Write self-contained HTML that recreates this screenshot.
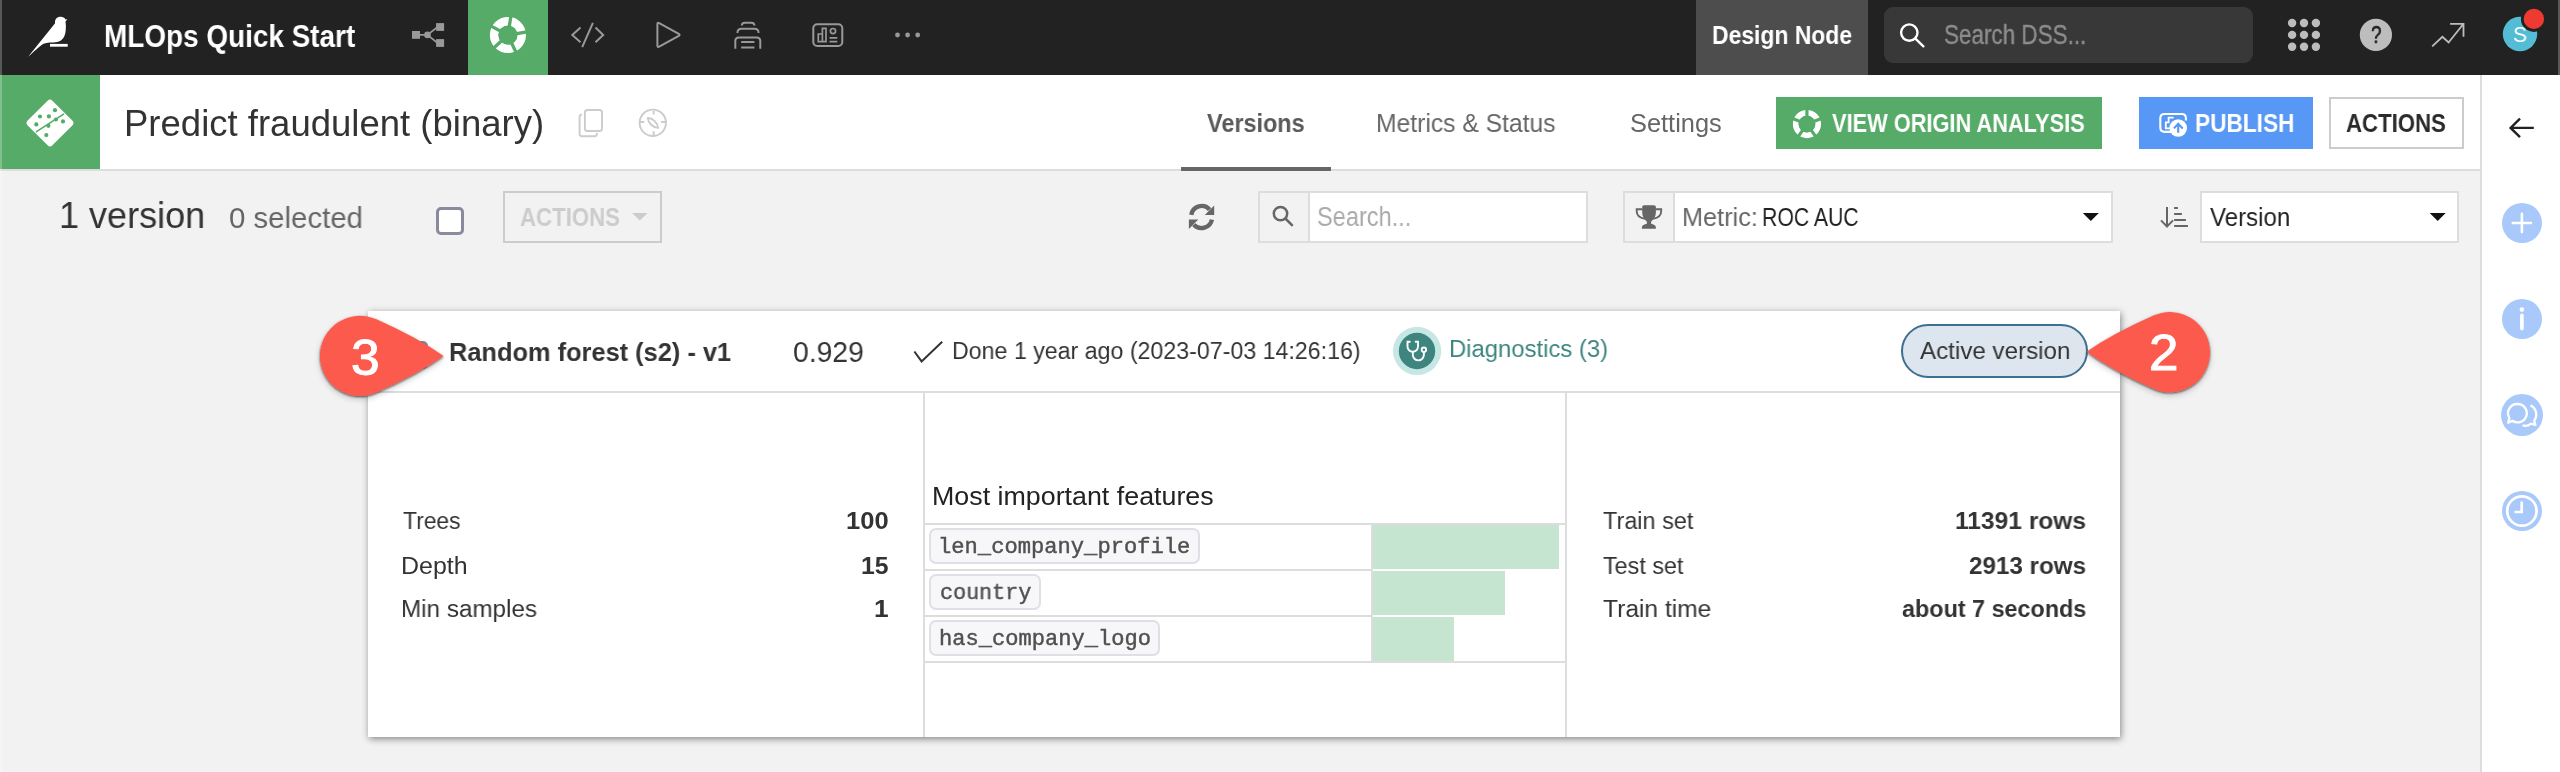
<!DOCTYPE html>
<html lang="en">
<head>
<meta charset="utf-8">
<title>Predict fraudulent (binary) - MLOps Quick Start</title>
<style>
*{box-sizing:border-box;margin:0;padding:0}
html,body{width:2560px;height:772px;overflow:hidden;background:#f2f2f2;font-family:"Liberation Sans",sans-serif}
.abs,.t,div,svg{position:absolute}
.t{white-space:nowrap;line-height:1;transform-origin:0 0;display:block;will-change:transform}
#topbar{left:0;top:0;width:2560px;height:75px;background:#222222}
#mlnav{left:468px;top:0;width:80px;height:75px;background:#55ab67}
#dnode{left:1696px;top:0;width:172px;height:75px;background:#4d4d4d}
#gsearch{left:1884px;top:7px;width:369px;height:56px;background:#383838;border-radius:9px}
#hdr{left:0;top:75px;width:2481px;height:94px;background:#fff}
#hdrline{left:0;top:169px;width:2481px;height:2px;background:#dddddd}
#objicon{left:0;top:75px;width:100px;height:94px;background:#55ab67}
#tabline{left:1181px;top:167px;width:150px;height:4px;background:#666}
#btn1{left:1776px;top:97px;width:326px;height:52px;background:#55ab67}
#btn2{left:2139px;top:97px;width:174px;height:52px;background:#5797f6}
#btn3{left:2329px;top:97px;width:135px;height:52px;background:#fff;border:2px solid #cccccc}
#side{left:2480px;top:75px;width:80px;height:697px;background:#fff;border-left:2px solid #dddddd}
.sc{width:40px;height:40px;border-radius:50%;background:#a8c9fa;left:2502px}
#chk{left:436px;top:207px;width:28px;height:28px;border:3px solid #8a8a9e;border-radius:5px;background:#fff}
#dactbtn{left:503px;top:191px;width:159px;height:52px;border:2px solid #cccccc}
.ig{top:191px;height:52px;border:2px solid #dddddd;background:#fff}
.igp{top:191px;height:52px;border:2px solid #dddddd;border-right:0;background:#f2f2f2}
#card{left:368px;top:311px;width:1752px;height:426px;background:#fff;box-shadow:1px 2px 7px rgba(0,0,0,.45)}
.hl{background:#dddddd;height:2px}
.vl{background:#dddddd;width:2px}
.tag{left:929px;height:36px;background:#f7f7f9;border:2px solid #dfdfe6;border-radius:7px}
.bar{left:1373px;height:44px;background:#c6e5d0}
#pill{left:1901px;top:324px;width:187px;height:54px;border:2px solid #3d6f8e;border-radius:27px;background:#dde6ee}
#cchk{left:400px;top:341px;width:28px;height:28px;border:3px solid #8a8a9e;border-radius:5px;background:#fff}
.edge{top:0;width:2px;height:772px}
</style>
</head>
<body>
<!-- ============ top navigation bar ============ -->
<div id="topbar"></div>
<div id="mlnav"></div>
<div id="dnode"></div>
<div id="gsearch"></div>
<span class="t" style="left:103.98px;top:21.1px;font-size:30.6px;font-weight:700;color:#ffffff;transform:scaleX(0.9121)">MLOps Quick Start</span>
<span class="t" style="left:1712.27px;top:22.07px;font-size:26.5px;font-weight:700;color:#ffffff;transform:scaleX(0.8648)">Design Node</span>
<span class="t" style="left:1944.16px;top:21.81px;font-size:26.8px;-webkit-text-stroke:.4px #8c8c8c;color:#8c8c8c;transform:scaleX(0.8383)">Search DSS...</span>
<svg id="navicons" style="left:0;top:0" width="2560" height="75" viewBox="0 0 2560 75">
<!-- bird logo -->
<path fill="#fff" d="M27.9,56.9 L55.1,23.2 C54.4,19.4 57,16.7 60.6,16.7 C63,16.7 64.6,17.8 65.6,19.4 L67.4,19.2 L65.5,21.6 C66,24.5 66,27.5 65.7,30.5 C65.1,36.8 62.4,41 57,42 C52,42.8 47,42.2 43.6,43.8 C41.2,45 38.5,47.6 27.9,56.9 Z"/>
<rect fill="#fff" x="50" y="43.9" width="17.7" height="2.8"/>
<!-- flow -->
<g fill="#999999" stroke="#999999">
<rect x="412" y="31" width="8" height="7.8" stroke="none"/>
<rect x="436.1" y="23.1" width="8" height="7.8" stroke="none"/>
<rect x="436.1" y="39.1" width="8" height="7.8" stroke="none"/>
<circle cx="427.5" cy="34.9" r="3.3" stroke="none"/>
<path d="M419,34.9 H427.5 M427.5,34.9 L437.5,27 M427.5,34.9 L437.5,43" fill="none" stroke-width="1.7"/>
</g>
<!-- ML ring -->
<circle cx="507.9" cy="35.05" r="13.68" fill="none" stroke="#fff" stroke-width="8.75"/>
<path d="M507.90,35.05 L510.96,15.74 M507.90,35.05 L527.21,31.99 M507.90,35.05 L516.16,52.77 M507.90,35.05 L493.49,48.26 M507.90,35.05 L490.64,25.87" fill="none" stroke="#55ab67" stroke-width="3.3"/>
<circle cx="507.9" cy="35.05" r="9.6" fill="#55ab67"/>
<!-- code -->
<g fill="none" stroke="#999999" stroke-width="2">
<path d="M580.5,27.6 L572.3,34.9 L580.5,42.2 M592.9,22.9 L582.2,47.1 M595.5,27.6 L603.2,34.9 L595.5,42.2"/>
<!-- play -->
<path d="M657.4,24.2 Q657.4,22.2 659.2,23.1 L678.8,33.8 Q680.4,34.8 678.8,35.8 L659.2,46.7 Q657.4,47.6 657.4,45.6 Z" stroke-linejoin="round"/>
<!-- jobs -->
<path d="M741.8,25.6 Q741.8,22.7 744.8,22.7 H751.4 Q754.4,22.7 754.4,25.6"/>
<path d="M737.4,33 Q737.4,28.8 741.8,28.8 H754.2 Q758.6,28.8 758.6,33"/>
<path d="M735.3,48.7 V41 Q735.3,37.4 739,37.4 H756.6 Q760.3,37.4 760.3,41 V48.7"/>
<path d="M741.2,41.9 H754.4 M741.2,47.6 H754.4"/>
<!-- dashboard -->
<rect x="813.3" y="24.2" width="29" height="21.7" rx="4"/>
<path d="M818.3,41.6 V34 H822.4 V28.3 H826 V41.6 Z M822.4,34 V41.6" stroke-width="1.7"/>
<circle cx="833" cy="31.1" r="2.6" stroke-width="1.7"/>
<path d="M829.5,37.9 H837.3 M829.5,41.7 H837.3" stroke-width="1.7"/>
</g>
<!-- more dots -->
<g fill="#999999"><circle cx="897.5" cy="35" r="2.4"/><circle cx="907.6" cy="35" r="2.4"/><circle cx="917.7" cy="35" r="2.4"/></g>
<!-- search magnifier -->
<g fill="none" stroke="#fff" stroke-width="2.4" stroke-linecap="round"><circle cx="1909.3" cy="32.6" r="8.2"/><path d="M1915.4,38.6 L1923.4,46.3"/></g>
<!-- apps grid -->
<g fill="#bdbdbd">
<circle cx="2292.1" cy="23" r="4.2"/><circle cx="2304" cy="23" r="4.2"/><circle cx="2315.9" cy="23" r="4.2"/>
<circle cx="2292.1" cy="34.9" r="4.2"/><circle cx="2304" cy="34.9" r="4.2"/><circle cx="2315.9" cy="34.9" r="4.2"/>
<circle cx="2292.1" cy="46.8" r="4.2"/><circle cx="2304" cy="46.8" r="4.2"/><circle cx="2315.9" cy="46.8" r="4.2"/>
<!-- help -->
<circle cx="2375.9" cy="34.9" r="16.1"/>
</g>
<!-- trend -->
<path d="M2432.2,46.4 L2442.4,36.8 L2448.6,42.5 L2463.5,23.8 M2450.1,23.8 H2463.5 V36.8" fill="none" stroke="#bdbdbd" stroke-width="1.8"/>
<!-- avatar -->
<circle cx="2520" cy="34" r="17.2" fill="#54bcd5"/>
<circle cx="2533.9" cy="18.9" r="13" fill="#222222"/>
<circle cx="2533.9" cy="18.9" r="10.2" fill="#ee3a30"/>

</svg>
<span class="t" style="left:2370.58px;top:24.13px;font-size:23px;-webkit-text-stroke:.5px #222;color:#222222;transform:scaleX(0.8182)">?</span>
<span class="t" style="left:2512.54px;top:23.88px;font-size:22px;color:#ffffff;transform:scaleX(0.9615)">S</span>

<!-- ============ object header ============ -->
<div id="hdr"></div>
<div id="hdrline"></div>
<div id="objicon"></div>
<div id="tabline"></div>
<span class="t" style="left:123.78px;top:106.27px;font-size:36.3px;color:#333333;transform:scaleX(1.0061)">Predict fraudulent (binary)</span>
<span class="t" style="left:1207.3px;top:111.27px;font-size:25.2px;font-weight:700;color:#5a5a5a;transform:scaleX(0.9298)">Versions</span>
<span class="t" style="left:1376.34px;top:111.27px;font-size:25.2px;color:#666666;transform:scaleX(0.979)">Metrics &amp; Status</span>
<span class="t" style="left:1629.79px;top:111.27px;font-size:25.2px;color:#666666;transform:scaleX(1.0079)">Settings</span>
<div id="btn1"></div>
<div id="btn2"></div>
<div id="btn3"></div>
<span class="t" style="left:1831.5px;top:110.8px;font-size:25.4px;font-weight:700;color:#ffffff;transform:scaleX(0.8582)">VIEW ORIGIN ANALYSIS</span>
<span class="t" style="left:2195.01px;top:110.8px;font-size:25.4px;font-weight:700;color:#ffffff;transform:scaleX(0.8926)">PUBLISH</span>
<span class="t" style="left:2346.43px;top:110.8px;font-size:25.4px;font-weight:700;color:#2b2b2b;transform:scaleX(0.8741)">ACTIONS</span>
<svg id="hdricons" style="left:0;top:75px" width="2481" height="94" viewBox="0 75 2481 94">
<!-- prediction model diamond -->
<g transform="rotate(45 50 123)"><rect x="32.5" y="105.5" width="35" height="35" rx="3.4" fill="#fff"/></g>
<g fill="#55ab67">
<circle cx="55" cy="110.2" r="2.1"/><circle cx="40" cy="116.5" r="2.1"/><circle cx="48.9" cy="116.4" r="2.1"/>
<circle cx="55.9" cy="119.5" r="2.1"/><circle cx="63" cy="121.4" r="2.1"/><circle cx="36.3" cy="124.4" r="2.1"/>
<circle cx="48.4" cy="125.8" r="2.1"/><circle cx="46.3" cy="135.1" r="2.1"/>
</g>
<path d="M36.5,131.7 L63.6,114.2" stroke="#55ab67" stroke-width="1.6" stroke-linecap="round"/>
<!-- copy -->
<g fill="none" stroke="#cccccc" stroke-width="1.9" stroke-linecap="round">
<rect x="584.9" y="110" width="17.1" height="21" rx="2.6"/>
<path d="M581.4,114.6 Q579.6,114.9 579.6,117 V134 Q579.6,136.2 581.8,136.2 H594.6 Q596.6,136.2 597,133.8"/>
<!-- compass -->
<circle cx="652.8" cy="122.8" r="13.2"/>
<path d="M653.7,111 V114.6 M653.7,131.3 V134.9 M640.1,122 H644.4 M661.1,122 H665.4" stroke-linecap="butt"/>
<path d="M647.8,118 C652.6,117.8 658,123.2 658.1,127.9 C653.3,128.1 647.9,122.7 647.8,118 Z" stroke-linejoin="round"/>
</g>
<!-- view origin analysis ring -->
<circle cx="1806.95" cy="124.07" r="11.25" fill="none" stroke="#fff" stroke-width="5.70"/>
<path d="M1806.95,124.07 L1806.95,108.47 M1806.95,124.07 L1821.51,118.48 M1806.95,124.07 L1815.90,136.85 M1806.95,124.07 L1798.00,136.85 M1806.95,124.07 L1792.39,118.48" fill="none" stroke="#55ab67" stroke-width="3.2"/>
<circle cx="1806.95" cy="124.07" r="8.40" fill="#55ab67"/>
<!-- publish icon -->
<g fill="none" stroke="#fff" stroke-width="2.1">
<path d="M2171,131.9 H2164.6 Q2160.3,131.9 2160.3,127.6 V118.3 Q2160.3,114 2164.6,114 H2181.6 Q2185.9,114 2185.9,118.3 V120.6"/>
<path d="M2170.6,128.4 H2165.8 V122.4 H2168.6 V117.6 H2173.6" stroke-width="1.8"/>
</g>
<circle cx="2178.2" cy="128" r="8.8" fill="#fff"/>
<path d="M2178.2,132.8 V124 M2173.9,128.4 L2178.2,123.8 L2182.7,128.4" fill="none" stroke="#5797f6" stroke-width="2.1"/>

</svg>

<!-- ============ right side panel ============ -->
<div id="side"></div>
<div class="sc" style="top:203px"></div>
<div class="sc" style="top:299px"></div>
<div class="sc" style="top:394px;left:2501px;width:42px;height:42px"></div>
<div class="sc" style="top:491px"></div>
<svg id="sideicons" style="left:2482px;top:75px" width="78" height="697" viewBox="2482 75 78 697">
<!-- back arrow -->
<path d="M2533.8,127.9 H2511 M2520,118.6 L2510.6,127.9 L2520,137.2" fill="none" stroke="#222" stroke-width="2.4"/>
<!-- plus -->
<path d="M2521.9,213.9 V232.1 M2512.8,223 H2531" stroke="#fff" stroke-width="2.6" stroke-linecap="round"/>
<!-- info -->
<circle cx="2521.9" cy="309.6" r="2.3" fill="#fff"/>
<path d="M2521.9,315.4 V328.6" stroke="#fff" stroke-width="3.6" stroke-linecap="round"/>
<!-- chat -->
<g fill="none" stroke="#fff" stroke-width="2.3" stroke-linejoin="round">
<path d="M2517.5,404 A9.2,9.2 0 1 1 2512.4,420.8 L2508.2,422.8 L2509.4,418 A9.2,9.2 0 0 1 2517.5,404 Z"/>
<path d="M2530.4,405.4 A10,10 0 0 1 2534.2,420.6 L2535.4,425 L2531,423.6 A9,9 0 0 1 2522.6,425.4"/>
</g>
<!-- clock -->
<circle cx="2521.9" cy="511" r="14.7" fill="none" stroke="#fff" stroke-width="2.7"/>
<path d="M2521.7,501.5 V512 H2514.5" fill="none" stroke="#fff" stroke-width="2.7"/>

</svg>

<!-- ============ filter row ============ -->
<span class="t" style="left:59.08px;top:197.08px;font-size:37px;color:#333333;transform:scaleX(0.9738)">1 version</span>
<span class="t" style="left:229.3px;top:203.43px;font-size:29.5px;color:#666666;transform:scaleX(0.9962)">0 selected</span>
<div id="chk"></div>
<div id="dactbtn"></div>
<span class="t" style="left:520.42px;top:204.9px;font-size:25.4px;font-weight:700;color:#cccccc;transform:scaleX(0.875)">ACTIONS</span>
<div class="igp" style="left:1258px;width:52px"></div>
<div class="ig" style="left:1308px;width:280px"></div>
<span class="t" style="left:1317.42px;top:203.71px;font-size:26.8px;color:#aaaaaa;transform:scaleX(0.8798)">Search...</span>
<div class="igp" style="left:1623px;width:52px"></div>
<div class="ig" style="left:1673px;width:440px"></div>
<span class="t" style="left:1682.39px;top:204.17px;font-size:26.5px;color:#666666;transform:scaleX(0.9533)">Metric:</span>
<span class="t" style="left:1762.4px;top:204.17px;font-size:26.5px;color:#222222;transform:scaleX(0.8008)">ROC AUC</span>
<div class="ig" style="left:2200px;width:259px"></div>
<span class="t" style="left:2210.3px;top:204.17px;font-size:26.5px;color:#222222;transform:scaleX(0.9069)">Version</span>
<svg id="rowicons" style="left:0;top:180px" width="2481" height="80" viewBox="0 180 2481 80">
<!-- disabled actions caret -->
<path d="M632,213 H647.6 L639.8,220.6 Z" fill="#cccccc"/>
<!-- refresh -->
<g fill="none" stroke="#666" stroke-width="4.4">
<path d="M1191.3,214.9 A10.5,10.5 0 0 1 1209.6,209.6"/>
<path d="M1211.9,219.6 A10.5,10.5 0 0 1 1193.8,224.6"/>
</g>
<path d="M1214.2,205.4 V214.9 H1204.8 Z" fill="#666"/>
<path d="M1188.9,229 V219.6 H1198.3 Z" fill="#666"/>
<!-- search magnifier -->
<g fill="none" stroke="#666" stroke-width="2.5"><circle cx="1280.5" cy="213.6" r="6.7"/><path d="M1285.4,218.5 L1292.7,225.8"/></g>
<!-- trophy -->
<path fill="#666" d="M1642.2,207 Q1642.2,205.2 1644,205.2 H1654 Q1655.9,205.2 1655.9,207 V212 C1655.9,217 1653,220 1651.2,221.5 V224 C1653,224.2 1655.9,225 1655.9,227.5 V228.8 H1641.9 V227.5 C1641.9,225 1645,224.2 1646.8,224 V221.5 C1645,220 1642.2,217 1642.2,212 Z"/>
<path d="M1642.6,209.3 H1636.7 V211 C1636.7,215.5 1640.2,218 1644.8,218.7 M1655.5,209.3 H1661.2 V211 C1661.2,215.5 1657.7,218 1653.2,218.7" fill="none" stroke="#666" stroke-width="1.9"/>
<!-- metric caret -->
<path d="M2082.8,213 H2098.8 L2090.8,221 Z" fill="#111"/>
<!-- sort -->
<g fill="none" stroke="#666" stroke-width="2">
<path d="M2167,207 V226 M2161,220.4 L2167,226.5 L2173,220.4"/>
<path d="M2174.1,207.9 H2177.9 M2174.1,214 H2181.9 M2174.1,220 H2185.9 M2174.1,225.9 H2187.9"/>
</g>
<!-- version caret -->
<path d="M2429.7,213 H2445.7 L2437.7,221 Z" fill="#111"/>

</svg>

<!-- ============ model version card ============ -->
<div id="card"></div>
<div class="hl" style="left:368px;top:391px;width:1752px"></div>
<div class="vl" style="left:923px;top:393px;height:344px"></div>
<div class="vl" style="left:1565px;top:393px;height:344px"></div>
<div id="cchk"></div>
<span class="t" style="left:449.07px;top:338.74px;font-size:26.3px;font-weight:700;color:#333333;transform:scaleX(0.9655)">Random forest (s2) - v1</span>
<span class="t" style="left:793.02px;top:338.05px;font-size:29px;color:#333333;transform:scaleX(0.9757)">0.929</span>
<span class="t" style="left:951.92px;top:339.49px;font-size:24.7px;color:#333333;transform:scaleX(0.9391)">Done 1 year ago (2023-07-03 14:26:16)</span>
<span class="t" style="left:1448.57px;top:337.39px;font-size:24.7px;color:#3b857e;transform:scaleX(0.9658)">Diagnostics (3)</span>
<div id="pill"></div>
<span class="t" style="left:1919.8px;top:339.49px;font-size:24.7px;color:#333333;transform:scaleX(0.9783)">Active version</span>
<span class="t" style="left:403.0px;top:509.49px;font-size:24.7px;color:#333333;transform:scaleX(0.9262)">Trees</span>
<span class="t" style="left:846.43px;top:509.49px;font-size:24.7px;font-weight:700;color:#333333;transform:scaleX(1.0342)">100</span>
<span class="t" style="left:400.98px;top:553.69px;font-size:24.7px;color:#333333;transform:scaleX(1.0111)">Depth</span>
<span class="t" style="left:860.69px;top:553.69px;font-size:24.7px;font-weight:700;color:#333333;transform:scaleX(1.004)">15</span>
<span class="t" style="left:401.04px;top:597.29px;font-size:24.7px;color:#333333;transform:scaleX(0.9816)">Min samples</span>
<span class="t" style="left:873.97px;top:597.29px;font-size:24.7px;font-weight:700;color:#333333;transform:scaleX(1.0636)">1</span>
<span class="t" style="left:931.95px;top:482.82px;font-size:26.2px;color:#222222;transform:scaleX(1.0239)">Most important features</span>
<div class="hl" style="left:925px;top:523px;width:640px"></div>
<div class="hl" style="left:925px;top:569px;width:446px"></div>
<div class="hl" style="left:925px;top:615px;width:446px"></div>
<div class="hl" style="left:925px;top:661px;width:640px"></div>
<div class="vl" style="left:1371px;top:525px;height:136px"></div>
<div class="bar" style="top:525px;width:186px"></div>
<div class="bar" style="top:571px;width:132px"></div>
<div class="bar" style="top:617px;width:81px"></div>
<div class="tag" style="top:528px;width:271px"></div>
<div class="tag" style="top:574px;width:112px"></div>
<div class="tag" style="top:620px;width:231px"></div>
<span class="t" style="left:937.78px;top:536.98px;font-size:22px;font-family:'Liberation Mono',monospace;-webkit-text-stroke:.45px #505050;color:#505050;transform:scaleX(1.0061)">len_company_profile</span>
<span class="t" style="left:939.81px;top:582.98px;font-size:22px;font-family:'Liberation Mono',monospace;-webkit-text-stroke:.45px #505050;color:#505050;transform:scaleX(0.9879)">country</span>
<span class="t" style="left:938.79px;top:628.98px;font-size:22px;font-family:'Liberation Mono',monospace;-webkit-text-stroke:.45px #505050;color:#505050;transform:scaleX(1.0034)">has_company_logo</span>
<span class="t" style="left:1602.5px;top:509.49px;font-size:24.7px;color:#333333;transform:scaleX(0.9505)">Train set</span>
<span class="t" style="left:1955.31px;top:509.49px;font-size:24.7px;font-weight:700;color:#333333;transform:scaleX(0.9946)">11391 rows</span>
<span class="t" style="left:1602.5px;top:553.69px;font-size:24.7px;color:#333333;transform:scaleX(0.9447)">Test set</span>
<span class="t" style="left:1969.02px;top:553.69px;font-size:24.7px;font-weight:700;color:#333333;transform:scaleX(0.9797)">2913 rows</span>
<span class="t" style="left:1602.5px;top:597.29px;font-size:24.7px;color:#333333;transform:scaleX(0.9954)">Train time</span>
<span class="t" style="left:1902.05px;top:597.29px;font-size:24.7px;font-weight:700;color:#333333;transform:scaleX(0.9461)">about 7 seconds</span>
<svg id="cardicons" style="left:0;top:290px" width="2481" height="130" viewBox="0 290 2481 130">
<defs>
<filter id="ds" x="-20%" y="-20%" width="140%" height="150%">
<feGaussianBlur in="SourceAlpha" stdDeviation="0.9" result="b1"/><feOffset in="b1" dx="0.3" dy="1.3" result="o1"/><feComponentTransfer in="o1" result="s1"><feFuncA type="linear" slope="0.62"/></feComponentTransfer>
<feGaussianBlur in="SourceAlpha" stdDeviation="3" result="b2"/><feOffset in="b2" dx="0" dy="2.5" result="o2"/><feComponentTransfer in="o2" result="s2"><feFuncA type="linear" slope="0.2"/></feComponentTransfer>
<feMerge><feMergeNode in="s2"/><feMergeNode in="s1"/><feMergeNode in="SourceGraphic"/></feMerge></filter>
</defs>
<!-- done check -->
<path d="M914.4,351.5 L921.6,361.4 L942.2,341.8" fill="none" stroke="#333" stroke-width="2"/>
<!-- diagnostics -->
<circle cx="1417.1" cy="350.9" r="24.1" fill="#c6e7e3"/>
<circle cx="1417" cy="351" r="18.2" fill="#3d857e"/>
<g fill="none" stroke="#fff" stroke-width="1.9" stroke-linecap="round">
<path d="M1409.8,341.8 H1407.5 V346.5 A5.25,5.25 0 0 0 1418,346.5 V341.8 H1415.7"/>
<path d="M1412.8,352 V354.8 A5.55,5.55 0 0 0 1423.9,354.8 V352.2"/>
<circle cx="1423.9" cy="349.7" r="2.2"/>
</g>
<!-- callout 3 -->
<path filter="url(#ds)" fill="#fb5a4d" d="M443.5,356.0 Q417.5,337.6 376.4,319.3 A40.1,40.1 0 1 0 376.4,392.5 Q417.5,374.2 443.5,356.0 Z"/>
<!-- callout 2 -->
<path filter="url(#ds)" fill="#fb5a4d" d="M2086.7,351.7 Q2112.4,333.9 2153.5,315.6 A40.1,40.1 0 1 1 2153.5,388.8 Q2112.4,370.5 2086.7,351.7 Z"/>

</svg>
<span class="t" style="left:351.28px;top:332.85px;font-size:50.5px;-webkit-text-stroke:1px #fff;color:#ffffff;transform:scaleX(1.02)">3</span>
<span class="t" style="left:2148.9px;top:327.65px;font-size:50.5px;-webkit-text-stroke:1px #fff;color:#ffffff;transform:scaleX(1.05)">2</span>

<div class="edge" style="left:0;background:rgba(255,255,255,.25)"></div>
<div class="edge" style="left:2558px;background:rgba(255,255,255,.25)"></div>
</body>
</html>
